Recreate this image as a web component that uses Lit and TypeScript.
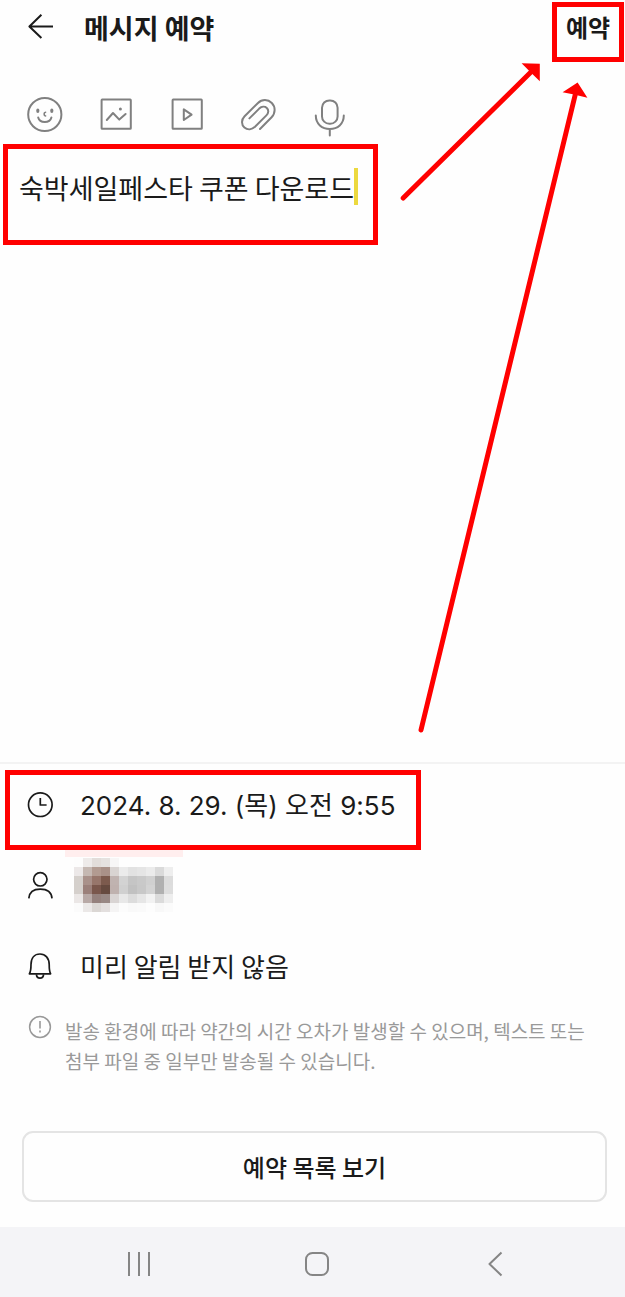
import { LitElement, html, css, svg } from "lit";
import { customElement, state } from "lit/decorators.js";

const MOSAIC: string[][] = [
  ["fdfdfd", "eeebea", "e2ddda", "e5e2e0", "f7f6f6", "fefefe", "fefefe", "fefefe", "fefefe", "fefefe", "fefefe"],
  ["ece8e8", "c5b8b2", "b29b91", "a99188", "d9d4d2", "ebebeb", "e2e2e2", "e5e5e5", "ebebeb", "dadada", "eeeeee"],
  ["d5d0cc", "a9918a", "97766b", "7c5a4d", "c0b3b0", "d3d3d3", "c5c5c5", "c9c9c9", "d0d0d0", "b0b0b0", "dcdcdc"],
  ["d5d0cc", "9b807a", "7a574c", "664a3f", "bfb1ae", "d0d0d0", "c1c1c1", "c8c8c8", "d3d3d3", "b0b0b0", "dddddd"],
  ["ebe7e6", "b8a9a6", "95817d", "988884", "d9d4d3", "e8e8e8", "dcdcdc", "e6e6e6", "f2f2f2", "dbdbdb", "eeeeee"],
  ["fbfbfb", "ebe8e7", "dbd7d4", "e3dfde", "f5f4f4", "fcfcfc", "f9f9f9", "fafafa", "fdfdfd", "f8f8f8", "fbfbfb"],
];

const TOOLS = [
  {
    label: "이모티콘",
    art: svg`<circle cx="17.8" cy="17.5" r="16.6"/>
      <ellipse cx="10.8" cy="13.7" rx="1.6" ry="2.2" fill="currentColor" stroke="none"/>
      <ellipse cx="24.8" cy="13.7" rx="1.6" ry="2.2" fill="currentColor" stroke="none"/>
      <path d="M18.6 15.2C16.6 15.4 16.6 18.8 18.6 19" stroke-width="1.6"/>
      <path d="M11.2 20.4C12.8 26.4 22.8 26.4 24.4 20.4"/>`,
  },
  {
    label: "사진",
    art: svg`<rect x="3.6" y="2.6" width="29.2" height="29.2" rx="0.6"/>
      <path d="M8.8 23L15 16L21.3 22.6L27.6 17"/>
      <circle cx="22.4" cy="12" r="1.5" fill="currentColor" stroke="none"/>`,
  },
  {
    label: "동영상",
    art: svg`<rect x="3.6" y="2.6" width="29.2" height="29.2" rx="0.6"/>
      <path d="M14.8 12.4V23L22.6 17.7Z"/>`,
  },
  {
    label: "파일",
    art: svg`<path d="M20 32L31.6 20.2C35.6 16 35.6 9.8 31.8 6C28 2.2 22 2 18 6L4.6 19.2C1.2 22.6 1.2 27.6 4.4 30.4C7.6 33.2 12 32.6 15 29.8L26.4 18.4C28.8 16 28.8 12.8 26.8 11C24.8 9.2 21.6 9.4 19.2 11.6L9.4 21.4"/>`,
  },
  {
    label: "음성",
    art: svg`<rect x="11" y="3.4" width="15.6" height="23.4" rx="7.4"/>
      <path d="M4.8 18.6C4.8 27 11 32 18.8 32S32.8 27 32.8 18.6M18.8 32V38.4"/>`,
  },
];

@customElement("app-root")
export class AppRoot extends LitElement {
  @state() private message = "숙박세일페스타 쿠폰 다운로드";

  static styles = css`
    :host {
      position: relative;
      display: flex;
      flex-direction: column;
      min-height: 100vh;
      overflow-x: hidden;
      background: #fefefe;
      color: #1a1a1a;
      font-family: "Noto Sans CJK KR", sans-serif;
      font-size: 26px;
      line-height: 40px;
    }
    * {
      box-sizing: border-box;
    }
    button,
    textarea {
      margin: 0;
      padding: 0;
      border: 0;
      background: none;
      color: inherit;
      font: inherit;
    }
    button {
      cursor: pointer;
    }
    svg {
      display: block;
      flex: none;
      overflow: visible;
      fill: none;
      stroke: currentColor;
      stroke-width: 2;
      stroke-linejoin: round;
    }
    .header {
      display: flex;
      align-items: flex-start;
      padding: 2px 1px 0 26px;
    }
    .back {
      padding: 10px 0;
    }
    .title {
      flex: 1;
      margin: 0;
      padding: 6px 0 0 28px;
      font-size: 27px;
      font-weight: 700;
      line-height: 40px;
    }
    .marked {
      border: 5px solid #ff0000;
    }
    .submit {
      width: 72px;
      height: 60px;
      padding-bottom: 10px;
      font-size: 24px;
      font-weight: 700;
      line-height: 40px;
      white-space: nowrap;
    }
    .tools {
      display: flex;
      gap: 35px;
      padding: 35px 27px 7px;
      color: #808080;
    }
    .compose {
      display: flex;
      align-items: flex-start;
      width: 60%;
      height: 101px;
      margin-left: 3px;
      padding: 19px 8px 17px 11px;
      font-size: 27px;
    }
    .message {
      field-sizing: content;
      max-width: 100%;
      height: 40px;
      overflow: hidden;
      resize: none;
      outline: none;
      white-space: nowrap;
      caret-color: #f0dc3c;
    }
    .caret {
      flex: none;
      width: 4px;
      height: 37px;
      background: #ecd93f;
    }
    .space {
      flex: 1;
    }
    .details {
      padding-top: 6px;
      border-top: 2px solid #f3f3f3;
    }
    .details svg {
      stroke-width: 1.7;
    }
    .row {
      display: flex;
      align-items: center;
      gap: 26px;
      padding-left: 26px;
      text-align: left;
      white-space: nowrap;
    }
    .date {
      width: 416px;
      max-width: 100%;
      height: 80px;
      margin-left: 5px;
      padding: 0 0 8px 16px;
      font-family: Inter, "Noto Sans CJK KR", sans-serif;
    }
    .person {
      gap: 11px;
      height: 72px;
    }
    .details .blurred {
      stroke: none;
    }
    .alarm {
      width: 100%;
      height: 88px;
    }
    .note {
      display: flex;
      align-items: flex-start;
      gap: 13px;
      margin: 0;
      padding: 6px 30px 0 28px;
      color: #999999;
      font-size: 19px;
      line-height: 30px;
      word-break: keep-all;
    }
    .list {
      display: block;
      width: calc(100% - 40px);
      height: 71px;
      margin: 55px 18px 25px 22px;
      border: 2px solid #e4e4e4;
      border-radius: 11px;
      font-size: 24px;
      font-weight: 500;
    }
    .system {
      display: flex;
      justify-content: space-around;
      align-items: center;
      height: 70px;
      padding: 4px 41px 0 50px;
      background: #f4f4f7;
      color: #858585;
    }
    .arrows {
      position: absolute;
      top: 0;
      right: 0;
      color: #ff0000;
      pointer-events: none;
    }
  `;

  private onInput(e: Event) {
    this.message = (e.target as HTMLTextAreaElement).value;
  }

  render() {
    return html`
      <header class="header">
        <button class="back" aria-label="뒤로">
          <svg width="30" height="30" viewBox="26 12 30 30">
            <path d="M41.4 14.8L29.4 26.5L41.4 38M29.4 26.5H53"/>
          </svg>
        </button>
        <h1 class="title">메시지 예약</h1>
        <button class="submit marked">예약</button>
      </header>

      <div class="tools">
        ${TOOLS.map(
          (t) => html`<button aria-label=${t.label}>
            <svg width="36" height="40" viewBox="0 0 36 40" stroke-linecap="round">${t.art}</svg>
          </button>`
        )}
      </div>

      <div class="compose marked">
        <textarea class="message" aria-label="메시지" rows="1" .value=${this.message} @input=${this.onInput}></textarea>
        <span class="caret"></span>
      </div>

      <div class="space"></div>

      <section class="details">
        <button class="row date marked">
          <svg width="28" height="28" viewBox="26 791 28 28">
            <circle cx="40.3" cy="803.7" r="11.8"/>
            <path d="M40.3 797V804H46.6"/>
          </svg>
          <span>2024. 8. 29. (목) 오전 9:55</span>
        </button>

        <div class="row person">
          <svg width="28" height="28" viewBox="26 871 28 28">
            <circle cx="40.3" cy="878.3" r="6.7"/>
            <path d="M28.8 897.4C29.4 890.6 34 888.2 40.3 888.2S51.4 890.6 52 897.4"/>
          </svg>
          <svg class="blurred" width="118" height="72" viewBox="65 850 118 72">
            <rect x="65" y="850" width="118" height="7" fill="#ffeeee"/>
            ${MOSAIC.map((cells, r) =>
              cells.map(
                (c, i) => svg`<rect x=${74 + i * 9} y=${858 + r * 9} width="9" height="9" fill=${"#" + c} shape-rendering="crispEdges"/>`
              )
            )}
          </svg>
        </div>

        <button class="row alarm">
          <svg width="28" height="28" viewBox="26 952 28 28">
            <path d="M29.4 973.8C31 971.4 31 969.4 31 964.6C31 958 34.6 954 40 954S49.2 958 49.2 964.6C49.2 969.4 49.2 971.4 50.6 973.8Z"/>
            <path d="M36.4 974.4C36.8 979.4 43.2 979.4 43.6 974.4"/>
          </svg>
          <span>미리 알림 받지 않음</span>
        </button>

        <p class="note">
          <svg width="24" height="24" viewBox="28 1016 24 24">
            <circle cx="40" cy="1027" r="10.4" stroke-width="1.5"/>
            <path d="M40 1021V1028.6M40 1030.4V1032.4" stroke-width="1.6"/>
          </svg>
          <span>발송 환경에 따라 약간의 시간 오차가 발생할 수 있으며, 텍스트 또는 첨부 파일 중 일부만 발송될 수 있습니다.</span>
        </p>

        <button class="list">예약 목록 보기</button>
      </section>

      <nav class="system" aria-label="시스템">
        <button aria-label="최근 앱">
          <svg width="24" height="26" viewBox="0 0 24 26"><path d="M2 1V25M12 1V25M22 1V25"/></svg>
        </button>
        <button aria-label="홈">
          <svg width="24" height="26" viewBox="0 0 24 26"><rect x="1" y="2" width="22" height="22" rx="6.5"/></svg>
        </button>
        <button aria-label="이전">
          <svg width="24" height="26" viewBox="0 0 24 26"><path d="M18.5 1.5L6.5 13L18.5 24.5"/></svg>
        </button>
      </nav>

      <svg class="arrows" width="225" height="740" viewBox="400 0 225 740" aria-hidden="true">
        <path d="M403.2 198L532 71M421 730L575.4 94" stroke-width="5" stroke-linecap="round"/>
        <path d="M521.6 63.3L539.8 63.8V81.2L530.8 72.4Z M577.6 82.6L562.6 92.2L574 94.4L587.4 97.8Z" fill="currentColor" stroke="none"/>
      </svg>
    `;
  }
}
